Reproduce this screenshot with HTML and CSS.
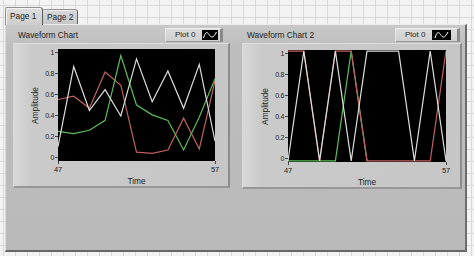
FILE: index.html
```html
<!DOCTYPE html>
<html>
<head>
<meta charset="utf-8">
<link rel="stylesheet" href="styles.css">
</head>
<body>
<div class="tabctl">
  <div class="tabs">
    <div class="tab tab-active">Page 1</div>
    <div class="tab tab-idle">Page 2</div>
  </div>
  <div class="panel">
    <div class="chart chart1">
      <div class="chart-head">
        <span class="chart-label">Waveform Chart</span>
        <div class="legend legend1">
          <span class="legend-text">Plot 0</span>
          <svg class="swatch" viewBox="0 0 16 10"><path d="M1.5 8 C3.5 1.5 5 1.5 7 4.5 S11 9 14.5 2" fill="none" stroke="#fff" stroke-width="1"/></svg>
        </div>
      </div>
      <div class="frame frame1">
        <div class="ytitle"><span>Amplitude</span></div>
        <div class="yticks"><span>1</span><span>0.8</span><span>0.6</span><span>0.4</span><span>0.2</span><span>0</span></div>
        <svg class="plot plot1" viewBox="0 -0.01 10 1.02" preserveAspectRatio="none">
          <polyline class="ln red" points="0,0.45 1,0.42 2,0.53 3,0.20 4,0.32 5,0.93 6,0.94 7,0.91 8,0.62 9,0.90 10,0.28"/>
          <polyline class="ln green" points="0,0.74 1,0.76 2,0.73 3,0.64 4,0.05 5,0.50 6,0.59 7,0.64 8,0.91 9,0.61 10,0.26"/>
          <polyline class="ln white" points="0,0.88 1,0.15 2,0.55 3,0.36 4,0.60 5,0.08 6,0.47 7,0.19 8,0.53 9,0.13 10,0.83"/>
        </svg>
        <div class="xticks"><span>47</span><span>57</span></div>
        <div class="xtitle">Time</div>
      </div>
    </div>
    <div class="chart chart2">
      <div class="chart-head">
        <span class="chart-label">Waveform Chart 2</span>
        <div class="legend legend2">
          <span class="legend-text">Plot 0</span>
          <svg class="swatch swatch2" viewBox="0 0 16 10"><path d="M1.5 8 C3.5 1.5 5 1.5 7 4.5 S11 9 14.5 2" fill="none" stroke="#fff" stroke-width="1"/></svg>
        </div>
      </div>
      <div class="frame frame2">
        <div class="ytitle"><span>Amplitude</span></div>
        <div class="yticks"><span>1</span><span>0.8</span><span>0.6</span><span>0.4</span><span>0.2</span><span>0</span></div>
        <svg class="plot plot2" viewBox="0 -0.01 10 1.02" preserveAspectRatio="none">
          <polyline class="ln green" points="0,1 1,1 2,1 3,1 4,0 5,1"/>
          <polyline class="ln red" points="0,0 1,0 2,1 3,0 4,0 5,1 6,1 7,1 8,1 9,1 10,0"/>
          <polyline class="ln white" points="0,1 1,0 2,1 3,0 4,1 5,0 6,0 7,0 8,1 9,0 10,1"/>
        </svg>
        <div class="xticks"><span>47</span><span>57</span></div>
        <div class="xtitle">Time</div>
      </div>
    </div>
  </div>
</div>
</body>
</html>
```
FILE: styles.css
```css
* { box-sizing: border-box; }

html, body {
  margin: 0;
  padding: 0;
  width: 474px;
  height: 256px;
  overflow: hidden;
}

body {
  font-family: "Liberation Sans", Arial, sans-serif;
  font-size: 8.3px;
  color: #1c1c1c;
  background-color: #f3f3f3;
  background-image:
    linear-gradient(to right, #d9d9d9 1px, transparent 1px),
    linear-gradient(to bottom, #d9d9d9 1px, transparent 1px);
  background-size: 12px 12px;
  background-position: 3px 5px;
}

.tabctl {
  margin: 7px 0 0 5px;
  width: 462px;
}

.tabs {
  display: flex;
  align-items: flex-end;
  height: 17px;
}

.tab {
  border: 1px solid #909090;
  border-bottom: none;
  border-radius: 2px 3px 0 0;
  line-height: 12px;
}

.tab-active {
  width: 38px;
  height: 18px;
  margin-bottom: -1px;
  padding: 2px 0 0 4px;
  background: linear-gradient(to bottom, #dedede, #cdcdcd);
  border-right-color: #5e5e5e;
  box-shadow: inset 1px 1px 0 #f6f6f6;
  position: relative;
  z-index: 1;
}

.tab-idle {
  width: 35px;
  height: 15px;
  padding: 1px 0 0 4px;
  background: linear-gradient(to bottom, #d8d8d8, #c6c6c6);
  border-left: none;
  border-right-color: #606060;
  box-shadow: inset 0 1px 0 #eeeeee;
}

.panel {
  height: 228px;
  display: flex;
  gap: 12px;
  padding: 2px 0 0 7px;
  border-top: 1px solid #ececec;
  border-left: 1px solid #d8d8d8;
  border-right: 2px solid #6c6c6c;
  border-bottom: 2px solid #666666;
  background: linear-gradient(to bottom, #c8c8c8 0px, #bdbdbd 22px, #bababa 100%);
}

.chart1 { width: 217px; }
.chart2 { width: 220px; }

.chart-head {
  height: 16px;
  display: flex;
  align-items: center;
  justify-content: space-between;
}

.chart-label {
  padding-left: 5px;
  line-height: 10px;
}

.legend {
  height: 14px;
  display: flex;
  align-items: center;
  background: linear-gradient(to bottom, #dcdcdc, #cfcfcf);
  border-top: 1px solid #eeeeee;
  border-left: 1px solid #e6e6e6;
  border-right: 3px solid #8a8a8a;
  border-bottom: 1px solid #9a9a9a;
}

.legend1 {
  width: 58px;
  margin-right: 7px;
  padding-left: 9px;
  gap: 7px;
}

.legend2 {
  width: 65px;
  margin-right: 2px;
  padding-left: 9px;
  gap: 7px;
}

.legend-text { line-height: 10px; font-size: 8px; }

.swatch {
  width: 16px;
  height: 10px;
  background: #000;
  display: block;
}

.swatch2 { width: 19px; }

.frame {
  display: grid;
  grid-template-rows: 112px 13px 10px;
  background: linear-gradient(to right, #d8d8d8 0px, #cacaca 18px, #c6c6c6 100%);
  border-top: 1px solid #dedede;
  border-left: 1px solid #dadada;
  border-right: 2px solid #8c8c8c;
  border-bottom: 2px solid #979797;
}

.frame1 {
  height: 145px;
  grid-template-columns: 12px 17px 157px;
  padding: 5px 13px 0 15px;
}

.frame2 {
  height: 146px;
  grid-template-columns: 12px 17px 158px;
  padding: 6px 14px 0 16px;
}

.ytitle {
  grid-column: 1;
  grid-row: 1;
  display: flex;
  align-items: center;
  justify-content: center;
}

.ytitle span {
  writing-mode: vertical-rl;
  transform: rotate(180deg);
  line-height: 10px;
}

.yticks {
  grid-column: 2;
  grid-row: 1;
  display: flex;
  flex-direction: column;
  justify-content: space-between;
  align-items: flex-end;
  font-size: 7px;
  letter-spacing: -0.3px;
}

.yticks span {
  display: flex;
  align-items: center;
  line-height: 7px;
}

.yticks span::after {
  content: "";
  width: 3px;
  height: 1px;
  margin-left: 1px;
  background: #444;
}

.plot {
  grid-column: 3;
  grid-row: 1;
  display: block;
  width: 100%;
  height: 112px;
  background: #000;
}

.ln {
  fill: none;
  stroke-width: 1.2;
  vector-effect: non-scaling-stroke;
  stroke-linejoin: miter;
}

.white { stroke: #dcdcdc; }
.red { stroke: #c06060; }
.green { stroke: #5abc5a; }

.xticks {
  grid-column: 3;
  grid-row: 2;
  display: flex;
  justify-content: space-between;
  margin: 0 -5px;
  font-size: 7.5px;
  letter-spacing: -0.2px;
}

.xticks span {
  display: flex;
  flex-direction: column;
  align-items: center;
  width: 10px;
  line-height: 8px;
}

.xticks span::before {
  content: "";
  width: 1px;
  height: 3px;
  margin-bottom: 2px;
  background: #444;
}

.xtitle {
  grid-column: 3;
  grid-row: 3;
  text-align: center;
  line-height: 10px;
  padding-top: 2px;
}
```
